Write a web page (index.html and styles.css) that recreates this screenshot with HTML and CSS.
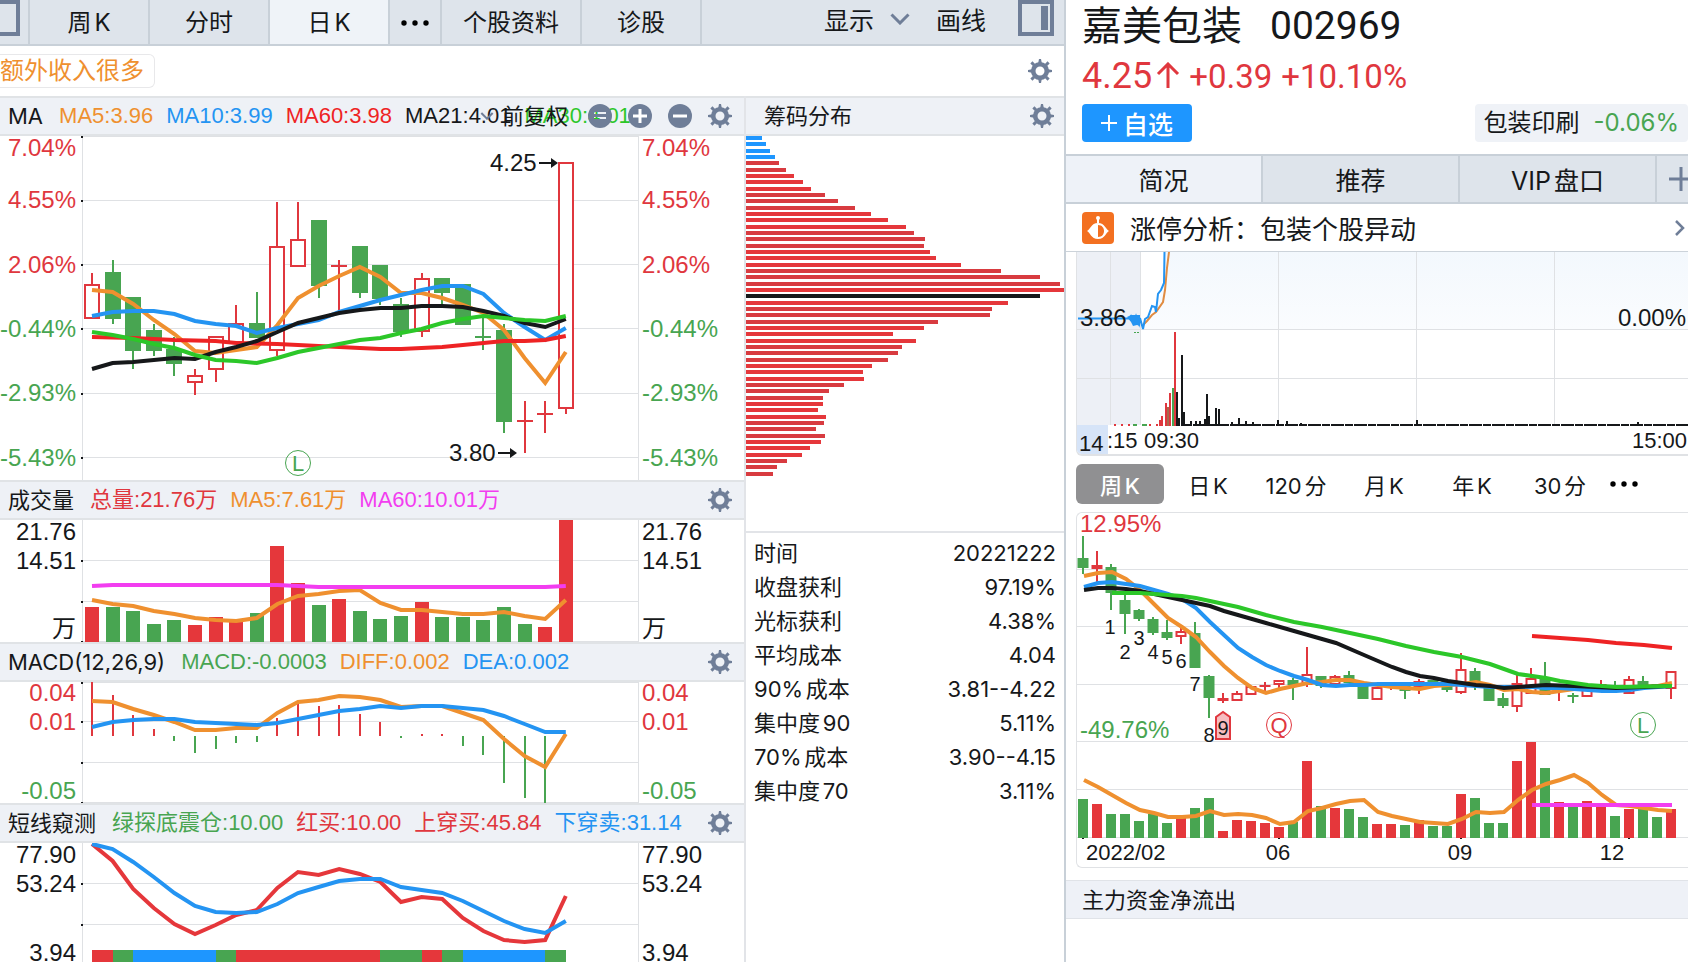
FILE: index.html
```html
<!DOCTYPE html>
<html lang="zh-CN">
<head>
	<meta charset="utf-8">
	<meta name="viewport" content="width=device-width, initial-scale=1">
	<title>嘉美包装 002969</title>
	<link rel="stylesheet" href="styles.css">
</head>
<body>
<svg class="defs" aria-hidden="true">
	<symbol id="gear" viewBox="0 0 24 24">
		<circle cx="12" cy="12" r="6.8" fill="none" stroke="currentColor" stroke-width="4.6"/>
		<path fill="currentColor" d="M10.2 4L11 0h2l.8 4zM10.2 20l.8 4h2l.8-4zM4 10.2L0 11v2l4 .8zM20 10.2l4 .8v2l-4 .8z"/>
		<path stroke="currentColor" stroke-width="3" d="M3.4 3.4L6 6M20.6 3.4L18 6M3.4 20.6L6 18M20.6 20.6L18 18"/>
	</symbol>
	<symbol id="equal" viewBox="0 0 24 24">
		<path fill="currentColor" fill-rule="evenodd" d="M12 0a12 12 0 0 1 0 24a12 12 0 0 1 0-24zM6 8v2h12V8zM6 13v2h12v-2z"/>
	</symbol>
	<symbol id="plus" viewBox="0 0 24 24">
		<circle cx="12" cy="12" r="12" fill="currentColor"/>
		<path stroke="#fff" stroke-width="3" d="M5 12h14M12 5v14"/>
	</symbol>
	<symbol id="minus" viewBox="0 0 24 24">
		<circle cx="12" cy="12" r="12" fill="currentColor"/>
		<path stroke="#fff" stroke-width="3" d="M5 12h14"/>
	</symbol>
	<symbol id="down" viewBox="0 0 20 12">
		<path d="M1.5 1.5L10 10l8.5-8.5" fill="none" stroke="currentColor" stroke-width="3"/>
	</symbol>
	<symbol id="dots" viewBox="0 0 28 6">
		<circle cx="3" cy="3" r="2.7"/><circle cx="14" cy="3" r="2.7"/><circle cx="25" cy="3" r="2.7"/>
	</symbol>
</svg>

<div class="page">
	<main class="board">
		<nav class="toolbar">
			<button class="tool edge" aria-label="左侧栏"><svg width="20" height="36"><path d="M0 2h18v32H0" fill="none" stroke="currentColor" stroke-width="4"/></svg></button>
			<button class="tool">周K</button>
			<button class="tool">分时</button>
			<button class="tool on">日K</button>
			<button class="tool more" aria-label="更多周期"><svg width="28" height="6"><use href="#dots"/></svg></button>
			<button class="tool wide">个股资料</button>
			<button class="tool">诊股</button>
			<div class="toolbar-right">
				<button class="plain">显示 <svg width="20" height="12"><use href="#down"/></svg></button>
				<button class="plain">画线</button>
				<button class="plain panel" aria-label="右侧栏"><svg width="36" height="36"><path d="M2 2h32v32H2z" fill="none" stroke="currentColor" stroke-width="4"/><path d="M23 6h7v24h-7z" fill="currentColor"/></svg></button>
			</div>
		</nav>

		<div class="tagbar">
			<a class="tag" href="#">额外收入很多</a>
			<button class="icon" aria-label="标签设置"><svg><use href="#gear"/></svg></button>
		</div>

		<div class="columns">
			<section class="charts">
				<header class="bar">
					<h2>MA</h2>
					<ul class="legend">
						<li class="orange">MA5:3.96</li>
						<li class="blue">MA10:3.99</li>
						<li class="bright">MA60:3.98</li>
						<li>MA21:4.01</li>
						<li class="lime">MA30:4.01</li>
					</ul>
					<div class="tools">
						<button class="plain adjust"><svg width="14" height="8"><use href="#down"/></svg>前复权</button>
						<button class="icon" aria-label="还原"><svg><use href="#equal"/></svg></button>
						<button class="icon" aria-label="放大"><svg><use href="#plus"/></svg></button>
						<button class="icon" aria-label="缩小"><svg><use href="#minus"/></svg></button>
						<button class="icon" aria-label="MA 设置"><svg><use href="#gear"/></svg></button>
					</div>
				</header>
				<svg class="chart" id="kline" viewBox="0 136 744 344"></svg>

				<header class="bar">
					<h2>成交量</h2>
					<ul class="legend">
						<li class="red">总量:21.76万</li>
						<li class="orange">MA5:7.61万</li>
						<li class="pink">MA60:10.01万</li>
					</ul>
					<button class="icon" aria-label="成交量设置"><svg><use href="#gear"/></svg></button>
				</header>
				<svg class="chart" id="volume" viewBox="0 520 744 122"></svg>

				<header class="bar">
					<h2>MACD(12,26,9)</h2>
					<ul class="legend">
						<li class="green">MACD:-0.0003</li>
						<li class="orange">DIFF:0.002</li>
						<li class="blue">DEA:0.002</li>
					</ul>
					<button class="icon" aria-label="MACD 设置"><svg><use href="#gear"/></svg></button>
				</header>
				<svg class="chart" id="macd" viewBox="0 682 744 121"></svg>

				<header class="bar">
					<h2>短线窥测</h2>
					<ul class="legend">
						<li class="green">绿探底震仓:10.00</li>
						<li class="red">红买:10.00</li>
						<li class="red">上穿买:45.84</li>
						<li class="blue">下穿卖:31.14</li>
					</ul>
					<button class="icon" aria-label="短线窥测设置"><svg><use href="#gear"/></svg></button>
				</header>
				<svg class="chart" id="short" viewBox="0 843 744 119"></svg>
			</section>

			<section class="chips">
				<header class="bar">
					<h2>筹码分布</h2>
					<button class="icon" aria-label="筹码设置"><svg><use href="#gear"/></svg></button>
				</header>
				<svg class="chart" id="chip" viewBox="746 136 318 395"></svg>
				<table class="stats">
					<tr><th>时间</th><td>20221222</td></tr>
					<tr><th>收盘获利</th><td>97.19%</td></tr>
					<tr><th>光标获利</th><td>4.38%</td></tr>
					<tr><th>平均成本</th><td>4.04</td></tr>
					<tr><th>90%成本</th><td>3.81--4.22</td></tr>
					<tr><th>集中度90</th><td>5.11%</td></tr>
					<tr><th>70%成本</th><td>3.90--4.15</td></tr>
					<tr><th>集中度70</th><td>3.11%</td></tr>
				</table>
			</section>
		</div>
	</main>

	<aside class="side">
		<div class="quote">
			<h1>嘉美包装 <span class="code">002969</span></h1>
			<p class="price"><strong>4.25</strong><svg width="24" height="26"><path d="M12 26V2M2 12L12 2l10 10" fill="none" stroke="currentColor" stroke-width="3"/></svg><span>+0.39</span><span>+10.10%</span></p>
			<div class="actions">
				<button class="add"><svg width="16" height="16"><path d="M0 8h16M8 0v16" stroke="#fff" stroke-width="2"/></svg>自选</button>
				<a class="sector" href="#">包装印刷 <span class="green">-0.06%</span></a>
			</div>
		</div>

		<nav class="tabs">
			<button class="tab on">简况</button>
			<button class="tab">推荐</button>
			<button class="tab">VIP盘口</button>
			<button class="tab new" aria-label="添加"><svg width="24" height="24"><path d="M0 12h24M12 0v24" stroke="currentColor" stroke-width="3"/></svg></button>
		</nav>

		<a class="news" href="#">
			<svg width="32" height="32"><rect width="32" height="32" rx="4" fill="#f37021"/><circle cx="16" cy="6" r="2" fill="#fff"/><path d="M15 7h2v4h-2z" fill="#fff"/><path d="M5 19c3-1 4-8 11-8s8 7 11 8c-3 1-4 8-11 8s-8-7-11-8z" fill="#fff"/><path d="M16 13c4 0 6 3 6 6s-2 6-6 6z" fill="#f37021"/></svg>
			<span>涨停分析：包装个股异动</span>
			<svg class="go" width="12" height="16"><path d="M2 1l7 7-7 7" fill="none" stroke="currentColor" stroke-width="2.5"/></svg>
		</a>

		<div class="card intraday"><svg class="chart" id="minute" viewBox="1077 252 611 202"></svg></div>

		<nav class="periods">
			<button class="period on">周K</button>
			<button class="period">日K</button>
			<button class="period">120分</button>
			<button class="period">月K</button>
			<button class="period">年K</button>
			<button class="period">30分</button>
			<button class="period dots" aria-label="更多"><svg width="28" height="6"><use href="#dots"/></svg></button>
		</nav>

		<div class="card weekly"><svg class="chart" id="week" viewBox="1077 513 611 354"></svg></div>

		<h2 class="section">主力资金净流出</h2>
	</aside>
</div>
<script src="charts.js"></script>
</body>
</html>
```
FILE: styles.css
```css
*{box-sizing:border-box}
body{
	margin:0;
	overflow:hidden;
	background:#fff;
	color:#16181a;
	font-family:Inter,"Noto Sans CJK SC",sans-serif;
	font-size:22px;
	text-autospace:normal;
}
h1,h2,p,ul{margin:0;padding:0;font-weight:normal}
button{
	margin:0;
	padding:0;
	border:0;
	background:none;
	color:inherit;
	font:inherit;
	cursor:pointer;
}
a{color:inherit;text-decoration:none}
svg{display:block;flex:none}
.defs{position:absolute;width:0;height:0}

.red{color:#e0373e}
.bright{color:#ee2324}
.green{color:#48a551}
.lime{color:#2cc729}
.orange{color:#ef902f}
.blue{color:#2494f2}
.pink{color:#f23df0}

.page{
	display:grid;
	grid-template-columns:minmax(0,1066fr) minmax(0,622fr);
	height:100vh;
}
.board{border-right:2px solid #c8d0d8;overflow:hidden}

/* top toolbar */
.toolbar{
	display:flex;
	height:46px;
	background:#dee4eb;
	border-bottom:2px solid #c8d0d8;
	font-size:24px;
}
.tool{
	width:120px;
	padding-bottom:4px;
	border-right:2px solid #c8d0d8;
	display:flex;
	align-items:center;
	justify-content:center;
}
.tool.on{background:#eff3f8}
.tool.edge{width:30px;justify-content:flex-start;align-items:flex-start;color:#6f7e98}
.tool.more{width:52px;padding:2px 0 0}
.tool.wide{width:140px}
.toolbar-right{
	display:flex;
	flex:1;
	justify-content:flex-end;
	gap:26px;
	padding-right:10px;
	font-size:25px;
}
.plain{display:flex;align-items:center;gap:16px}
.plain svg{color:#6f7e98}
.toolbar .plain{padding-bottom:6px}
.toolbar .panel{align-items:flex-start;margin-left:6px}

.tagbar{
	display:flex;
	align-items:center;
	justify-content:space-between;
	height:50px;
	padding-right:12px;
}
.tag{
	height:34px;
	line-height:32px;
	padding-right:10px;
	border:1px solid #e8e8ea;
	border-left:0;
	border-radius:0 6px 6px 0;
	color:#ef902f;
	font-size:24px;
}
.icon{color:#6f7e98}
.icon svg{width:24px;height:24px}

/* charts */
.columns{display:grid;grid-template-columns:minmax(0,746fr) minmax(0,318fr);height:calc(100vh - 96px)}
.charts{border-right:2px solid #e2e4e8}
.chart{
	width:100%;
	height:auto;
	font-family:"Liberation Sans","Noto Sans CJK SC",sans-serif;
}
.bar{
	position:relative;
	display:flex;
	align-items:center;
	gap:16px;
	height:40px;
	padding:0 12px 0 8px;
	background:#eef1f6;
	border-top:2px solid #e0e3e6;
	border-bottom:2px solid #e0e3e6;
	white-space:nowrap;
}
.bar h2{font-size:22px;line-height:32px}
.bar > .icon{margin-left:auto}
.legend{
	display:flex;
	gap:13px;
	list-style:none;
	font-family:"Liberation Sans","Noto Sans CJK SC",sans-serif;
	line-height:32px;
	text-autospace:no-autospace;
}
.tools{
	position:absolute;
	right:12px;
	top:6px;
	display:flex;
	align-items:center;
	gap:16px;
}
.adjust{gap:8px;margin-right:4px;line-height:24px}
.chips .bar{padding:0 10px 0 18px}
.stats{
	width:100%;
	padding:3px 8px 0;
	border-top:2px solid #e2e4e8;
	border-spacing:0;
	font-size:22px;
}
.stats th,.stats td{height:34px;padding:0;font-weight:normal;line-height:32px}
.stats th{text-align:left}
.stats td{text-align:right}

/* quote */
.side{overflow:hidden}
.quote{padding:0 0 12px 16px}
.quote h1{
	display:flex;
	gap:28px;
	height:48px;
	line-height:52px;
	font-size:40px;
}
.code{font-family:Roboto,sans-serif;font-size:39px}
.price{
	display:flex;
	align-items:baseline;
	height:56px;
	line-height:56px;
	color:#e0373e;
	font-family:Roboto,sans-serif;
	font-size:33px;
}
.price strong{font-weight:normal;font-size:36px}
.price svg{margin:0 9px 0 4px}
.price span{margin-right:9px}
.actions{display:flex;justify-content:space-between}
.add{
	display:flex;
	align-items:center;
	justify-content:center;
	gap:6px;
	width:110px;
	height:38px;
	border-radius:4px;
	background:#1e96ff;
	color:#fff;
	font-size:25px;
	font-weight:500;
}
.sector{
	display:flex;
	gap:14px;
	padding:0 9px;
	height:38px;
	line-height:38px;
	border-radius:4px;
	background:#eff2f7;
	font-size:24px;
}
.tabs{
	display:flex;
	height:50px;
	background:#dee4eb;
	border-top:2px solid #c8d0d8;
	border-bottom:2px solid #c8d0d8;
	font-size:25px;
}
.tab{flex:0 0 197px;border-right:2px solid #c8d0d8}
.tab.on{background:#eef2f8}
.tab.new{flex:0 0 48px;display:flex;align-items:center;justify-content:center;border:0;color:#6f7e98}
.news{
	display:flex;
	align-items:center;
	gap:16px;
	height:48px;
	padding:0 2px 0 16px;
	border-bottom:1px solid #ccd3da;
	font-size:26px;
}
.go{margin-left:auto;color:#6f7e98}

.card{
	margin-left:10px;
	border:1px solid #e0e2e5;
	border-right:0;
	border-radius:6px 0 0 6px;
	overflow:hidden;
}
.intraday{border-top:0;border-bottom-width:2px;border-top-left-radius:0}
.periods{display:flex;align-items:center;padding:8px 0 8px 10px}
.period{width:88px;height:40px;font-size:22px}
.period.on{border-radius:6px;background:#909092;color:#fff;font-weight:500}
.period.dots{display:flex;align-items:center;width:40px;padding-left:6px}
.section{
	height:39px;
	margin-top:12px;
	padding-left:16px;
	background:#eef1f7;
	border-top:1px solid #e0e3e8;
	border-bottom:1px solid #e0e3e8;
	font-size:22px;
	line-height:39px;
}
```
FILE: charts.js
```js
var RED = '#e0373e', FILL = '#e5373b', GREEN = '#48a551', ORANGE = '#ef902f', BLUE = '#2494f2';
var BLACK = '#16181a', LIME = '#2cc729', BRIGHT = '#ee2324', PINK = '#f23df0', GRID = '#dfe1e4';
var N = null;

function rect(x, y, w, h, c) {
	return '<rect x="' + x + '" y="' + y + '" width="' + w + '" height="' + h + '" fill="' + c + '"/>';
}
function text(x, y, s, c, anchor, size) {
	size = size || 24;
	return '<text x="' + x + '" y="' + Math.floor(y + size * 0.33) + '" fill="' + c + '" font-size="' + size + '" text-anchor="' + (anchor || 'start') + '">' + s + '</text>';
}
// one polyline, null entries are bridged
function line(x0, step, ys, c, w) {
	var p = [];
	ys.forEach(function (y, i) { if (y !== N) p.push((x0 + i * step).toFixed(1) + ',' + y); });
	return '<polyline points="' + p.join(' ') + '" fill="none" stroke="' + c + '" stroke-width="' + (w || 4) + '"/>';
}
// [kind, top, bottom, high, low]; kind r = hollow, R = solid red, g = green
function candles(x0, step, w, list) {
	return list.map(function (d, i) {
		var x = Math.round(x0 + i * step), c = d[0] == 'g' ? GREEN : RED, s = '';
		if (d[3] < d[1]) s += rect(x - 1, d[3], 2, d[1] - d[3], c);
		if (d[4] > d[2]) s += rect(x - 1, d[2], 2, d[4] - d[2], c);
		if (d[0] == 'r') s += '<rect x="' + (x - w / 2 + 1) + '" y="' + (d[1] + 1) + '" width="' + (w - 2) + '" height="' + (d[2] - d[1] - 2) + '" fill="#fff" stroke="' + c + '" stroke-width="2"/>';
		else s += rect(x - w / 2, d[1], w, d[2] - d[1], c);
		return s;
	}).join('');
}
function bars(x0, step, w, base, kinds, tops) {
	return tops.map(function (y, i) {
		return rect(Math.round(x0 + i * step) - w / 2, y, w, base - y, kinds[i] == 'g' ? GREEN : FILL);
	}).join('');
}
function frame(top, bottom, rows) {
	var s = rect(82, top, 1, bottom - top, GRID) + rect(638, top, 1, bottom - top, GRID);
	rows.forEach(function (y) { s += rect(82, y, 556, 1, GRID) + rect(81, y, 2, 2, BLACK); });
	return s;
}
function labels(list) {
	return list.map(function (d) {
		return text(76, d[0], d[1], d[2], 'end') + text(642, d[0], d[1], d[2]);
	}).join('');
}
function badge(x, y, s, c) {
	return '<circle cx="' + x + '" cy="' + y + '" r="12.5" fill="none" stroke="' + c + '"/>' + text(x, y + 1, s, c, 'middle', 22);
}
function arrow(x, y) {
	return rect(x, y - 1, 14, 2, BLACK) + '<path d="M' + (x + 12) + ' ' + (y - 5) + 'l7 5-7 5z" fill="' + BLACK + '"/>';
}
function draw(id, s) { document.getElementById(id).innerHTML = s; }

var X = 92, S = 20.6;

draw('kline', frame(136, 480, [136, 200, 264, 328, 393, 457]) +
	labels([[149, '7.04%', RED], [201, '4.55%', RED], [266, '2.06%', RED], [330, '-0.44%', GREEN], [394, '-2.93%', GREEN], [459, '-5.43%', GREEN]]) +
	candles(X, S, 16, [
		['r', 284, 319, 273, 319], ['g', 272, 319, 260, 324], ['g', 297, 351, 297, 369], ['g', 330, 351, 324, 356],
		['g', 349, 364, 337, 376], ['r', 375, 383, 369, 395], ['r', 336, 370, 336, 382], ['r', 323, 343, 305, 343],
		['g', 323, 338, 292, 338], ['r', 246, 351, 202, 356], ['r', 239, 267, 202, 267], ['g', 220, 286, 220, 298],
		['R', 265, 267, 260, 312], ['g', 246, 293, 246, 298], ['g', 265, 299, 265, 305], ['g', 304, 332, 298, 337],
		['r', 278, 332, 273, 337], ['g', 278, 293, 278, 305], ['g', 284, 325, 284, 325], ['g', 336, 338, 316, 350],
		['g', 330, 422, 324, 433], ['R', 420, 422, 401, 453], ['R', 413, 415, 401, 433], ['r', 162, 409, 162, 414]]) +
	line(X, S, [290, 292, 304, 320, 334, 351, 353, 350, 347, 325, 298, 286, 276, 267, 277, 293, 293, 298, 305, 313, 330, 358, 383, 352], ORANGE) +
	line(X, S, [316, 312, 311, 311, 314, 321, 324, 326, 333, 328, 324, 320, 312, 306, 300, 295, 290, 286, 286, 294, 313, 327, 340, 328], BLUE) +
	line(X, S, [337, N, 338, N, 340, N, 341, 343, N, 344, N, 346, N, N, 349, 349, N, 347, 345, N, 341, 341, 340, 336], BRIGHT) +
	line(X, S, [369, 363, 362, 360, 358, 359, 352, 347, 341, 332, 323, 318, 313, 310, 308, 308, 306, 306, 307, 311, 316, 323, 327, 319], BLACK) +
	line(X, S, [332, 335, 339, 344, 348, 355, 360, 361, 363, 358, 352, 348, 344, 340, 338, 333, 329, 323, 319, 316, 318, 320, 321, 316], LIME) +
	text(490, 164, '4.25', BLACK) + arrow(539, 163) + text(449, 454, '3.80', BLACK) + arrow(498, 453) +
	badge(298, 463, 'L', GREEN));

draw('volume', frame(520, 642, [560, 601, 641]) +
	labels([[533, '21.76', BLACK], [562, '14.51', BLACK], [630, '万', BLACK]]) +
	bars(X, S, 14, 642, 'rggggrrrgrrgrgggrgggggrr', [607, 607, 611, 624, 620, 625, 617, 620, 613, 546, 583, 605, 599, 611, 619, 616, 602, 617, 617, 620, 607, 624, 627, 520]) +
	line(X, S, [600, 604, 606, 611, 614, 618, 620, 621, 618, 604, 596, 594, 591, 590, 603, 610, 610, 612, 614, 614, 612, 616, 619, 600], ORANGE) +
	line(X, S, [586, 585, N, N, N, N, N, N, N, 585, N, 587, N, N, N, N, N, N, N, N, N, N, 587, 586], PINK));

var macd = [-55, -41, -21, -7, 5, 17, 13, 7, 6, -18, -32, -30, -31, -22, -14, 2, -2, -2, 10, 19, 47, 62, 67];
draw('macd', frame(682, 803, [682, 721, 762, 802]) +
	labels([[694, '0.04', RED], [723, '0.01', RED], [792, '-0.05', GREEN]]) +
	macd.map(function (v, i) {
		return rect(Math.round(X + i * S) - 1, v < 0 ? 736 + v : 736, 2, Math.abs(v), v < 0 ? RED : GREEN);
	}).join('') +
	line(X, S, [701, 702, 709, 715, 722, 730, 730, 728, 728, 713, 702, 700, 696, 697, 700, 707, 706, 706, 713, 720, 739, 756, 767, 734], ORANGE) +
	line(X, S, [727, 722, 720, 719, 719, 722, 723, 724, 725, 723, 719, 715, 711, 709, 706, 708, 706, 706, 708, 710, 716, 724, 732, 732], BLUE));

// from, to (candle index), colour
var strip = [[0, 1, FILL], [1, 2, GREEN], [2, 6, '#1e96ff'], [6, 7, GREEN], [7, 14, FILL], [14, 16, GREEN], [16, 17, FILL], [17, 18, GREEN], [18, 22, '#1e96ff'], [22, 23, GREEN]];
draw('short', frame(843, 962, [883, 924]) +
	labels([[856, '77.90', BLACK], [885, '53.24', BLACK], [954, '3.94', BLACK]]) +
	line(X, S, [844, 861, 889, 908, 924, 934, 925, 915, 910, 888, 872, 875, 869, 874, 882, 902, 897, 899, 918, 931, 940, 942, 940, 896], FILL) +
	line(X, S, [844, 849, 862, 877, 893, 906, 912, 913, 912, 904, 893, 887, 881, 879, 879, 887, 890, 893, 901, 911, 921, 929, 933, 921], BLUE) +
	strip.map(function (d) {
		var a = Math.round(X + d[0] * S), b = Math.round(X + d[1] * S);
		return rect(a, 950, b - a, 12, d[2]);
	}).join(''));

// chip distribution, one bar per price level
var chips = [16, 20, 24, 29, 33, 40, 48, 57, 65, 79, 92, 109, 125, 142, 160, 168, 179, 178, 184, 190, 215, 255, 294, 314, 318,
	294, 262, 246, 244, 192, 178, 147, 170, 156, 152, 142, 126, 117, 118, 98, 83, 77, 77, 72, 80, 78, 70, 79, 75, 64, 56, 41, 31, 27];
draw('chip', chips.map(function (w, i) {
	return rect(746, Math.round(136 + i * 19 / 3), w, 4, i < 4 ? '#1e96ff' : i == 25 ? BLACK : i % 6 < 3 ? FILL : '#d83b40');
}).join(''));

// minute chart
var vols = [[1160, 420, RED], [1162, 416, RED], [1166, 403, RED], [1168, 407, '#a8694d'], [1170, 393, RED], [1173, 388, GREEN], [1175, 332, RED],
	[1177, 392], [1179, 418], [1182, 355], [1184, 412], [1191, 421], [1196, 421], [1200, 421], [1205, 419], [1207, 394], [1209, 416], [1216, 408], [1219, 409],
	[1232, 422], [1239, 418], [1246, 421], [1253, 422], [1278, 420], [1287, 421], [1301, 423], [1417, 420], [1638, 422]];
var m = '<defs><linearGradient id="sky" x1="0" y1="0" x2="0" y2="1"><stop offset="0" stop-color="#f3f8fd"/><stop offset="1" stop-color="#fafcfe"/></linearGradient></defs>' +
	rect(1077, 252, 64, 173, '#edf0f6') +
	'<path d="M1164 252V284L1157 306 1143 329H1688V252z" fill="url(#sky)"/>';
[1110, 1140, 1278, 1416, 1554].forEach(function (x) { m += rect(x, 252, 1, 173, GRID); });
m += rect(1077, 329, 611, 1, GRID) + rect(1077, 378, 611, 1, GRID);
m += '<polyline points="1143,325 1147,321 1152,315 1156,312 1163,302 1165,290 1167,268 1169,252" fill="none" stroke="#e08c42" stroke-width="2"/>';
m += '<polyline points="1078,318.5 1129,318.5 1131,316 1134,321 1136,316 1139,324 1140,318 1143,329 1145,319 1148,317 1152,306 1155,307 1156,312 1158,294 1161,290 1164,283 1164.5,252" fill="none" stroke="' + BLUE + '" stroke-width="2"/>';
m += '<path d="M1127 317l4-2h9v11l-3-1-4 1-2-4z" fill="' + BLUE + '"/>';
m += rect(1134, 332, 2, 1, GREEN) + rect(1137, 332, 2, 1, GREEN);
vols.forEach(function (v) { m += rect(v[0] - 1, v[1], 2, 426 - v[1], v[2] || BLACK); });
m += '<path d="M1114 425h46" stroke="' + RED + '" stroke-width="2" stroke-dasharray="2 5"/>';
m += '<path d="M1133 425h4M1142 425h5" stroke="' + GREEN + '" stroke-width="2"/>';
m += '<path d="M1184 425H1688" stroke="' + BLACK + '" stroke-width="2" stroke-dasharray="8 1 13 1"/>';
m += rect(1077, 425, 31, 29, '#d6e4f8');
m += text(1080, 319, '3.86', BLACK) + text(1686, 319, '0.00%', BLACK, 'end');
m += text(1079, 444, '14', BLACK, 'start', 22) + text(1107, 441, ':15', BLACK, 'start', 22) + text(1144, 441, '09:30', BLACK, 'start', 22) + text(1687, 441, '15:00', BLACK, 'end', 22);
draw('minute', m);

// weekly chart
var k = '';
[569, 626, 684, 741, 789, 837].forEach(function (y) { k += rect(1077, y, 611, 1, GRID); });
[1083, 1279, 1461, 1629].forEach(function (x) { k += rect(x - 1, 837, 2, 2, BLACK); });
k += candles(1083, 14, 11, [
	['g', 558, 568, 536, 574], ['R', 565, 569, 551, 582], ['g', 567, 593, 564, 610], ['g', 600, 614, 595, 634], ['g', 610, 619, 609, 621],
	['g', 619, 633, 617, 635], ['g', 632, 638, 620, 640], ['r', 631, 637, 628, 644], ['g', 633, 668, 622, 668], ['g', 676, 698, 675, 718],
	['R', 698, 701, 693, 703], ['r', 693, 701, 691, 701], ['r', 686, 695, 686, 695], ['R', 685, 687, 682, 694], ['r', 680, 685, 680, 688],
	['g', 680, 685, 678, 700], ['r', 674, 685, 647, 687], ['g', 676, 686, 676, 688], ['r', 676, 685, 675, 685], ['g', 675, 683, 671, 683],
	['g', 683, 699, 683, 699], ['r', 687, 700, 687, 700], ['R', 683, 687, 682, 690], ['g', 683, 691, 683, 699], ['R', 681, 687, 679, 694],
	['g', 680, 685, 680, 685], ['g', 681, 690, 681, 692], ['r', 669, 693, 653, 694], ['g', 671, 687, 668, 690], ['g', 687, 701, 687, 701],
	['g', 698, 706, 693, 708], ['r', 683, 707, 675, 712], ['r', 678, 694, 668, 694], ['g', 677, 695, 662, 695], ['R', 685, 687, 685, 701],
	['g', 695, 697, 693, 703], ['r', 688, 697, 688, 697], ['R', 684, 689, 680, 689], ['g', 685, 690, 681, 690], ['r', 679, 694, 676, 694],
	['g', 681, 688, 676, 688], ['g', 684, 688, 684, 688], ['r', 671, 689, 671, 699]]);
k += line(1084, 14, [576, 573, 572, 579, 590, 604, 618, 627, 637, 652, 666, 678, 688, 693, 689, 686, 683, 682, 680, 680, 683, 685, 687, 688, 689, 686, 685, 684, 682, 685, 690, 689, 692, 693, 691, 689, 689, 689, 689, 688, 687, 686, 683], ORANGE);
k += line(1084, 14, [587, 583, 582, 584, 586, 590, 594, 599, 608, 622, 635, 648, 657, 665, 671, 676, 680, 685, 686, 685, 685, 684, 684, 684, 684, 684, 684, 685, 686, 687, 687, 687, 687, 688, 688, 689, 690, 691, 691, 690, 688, 687, 686], BLUE);
k += line(1084, 14, [590, 588, 588, 589, 591, 594, 597, 600, 603, 606, 611, N, N, 623, N, 631, N, 639, 643, N, 655, 661, 667, 672, 676, 678, 681, 683, 685, 686, 688, 687, N, 685, N, 686, N, N, 688, N, N, N, 686], BLACK);
k += line(1084, 14, [N, N, 593, 593, 593, 594, 595, 596, 598, 601, 604, 607, N, 615, N, 622, N, 627, 630, N, 636, 639, N, 646, N, 652, N, 657, N, 664, 669, 674, N, 678, 681, N, 685, N, 687, N, N, N, 686], LIME);
k += line(1084 + 32 * 14, 14, [636, N, 638, N, 640, N, 643, N, 645, N, 648], BRIGHT);
k += bars(1083, 14, 10, 838, 'grgggggrggrrrrrgrgrggrrgrggrgggrrgrgrrgrggr', [799, 804, 814, 814, 821, 814, 823, 817, 808, 798, 831, 820, 821, 823, 827, 822, 761, 806, 808, 809, 817, 824, 824, 825, 820, 826, 826, 794, 798, 823, 823, 761, 742, 768, 802, 805, 801, 803, 816, 809, 808, 817, 809]);
k += line(1084, 14, [780, 787, 795, 803, 810, 813, 817, 817, 816, 811, 815, 814, 815, 818, 824, 822, 811, 808, 804, 801, 800, 812, 816, 819, 822, 823, 824, 819, 812, 813, 812, 800, 790, 784, 780, 775, 783, 795, 805, 806, 808, 810, 811], ORANGE);
k += line(1084 + 32 * 14, 14, [805, N, N, N, N, N, N, N, N, N, 805], PINK);
k += '<path d="M1216 717l7-5 7 5v22h-14z" fill="#f6bcc0" stroke="' + RED + '" stroke-width="2"/>';
[[1110, 627], [1125, 652], [1139, 638], [1153, 652], [1167, 657], [1181, 661], [1195, 684], [1209, 735], [1223, 728]].forEach(function (p, i) {
	k += text(p[0], p[1] + 1, i + 1, BLACK, 'middle', 20);
});
k += badge(1279, 725, 'Q', RED) + badge(1643, 725, 'L', GREEN);
k += text(1080, 525, '12.95%', RED) + text(1080, 731, '-49.76%', GREEN);
k += text(1086, 853, '2022/02', BLACK, 'start', 22) + text(1278, 853, '06', BLACK, 'middle', 22) + text(1460, 853, '09', BLACK, 'middle', 22) + text(1612, 853, '12', BLACK, 'middle', 22);
draw('week', k);
```
